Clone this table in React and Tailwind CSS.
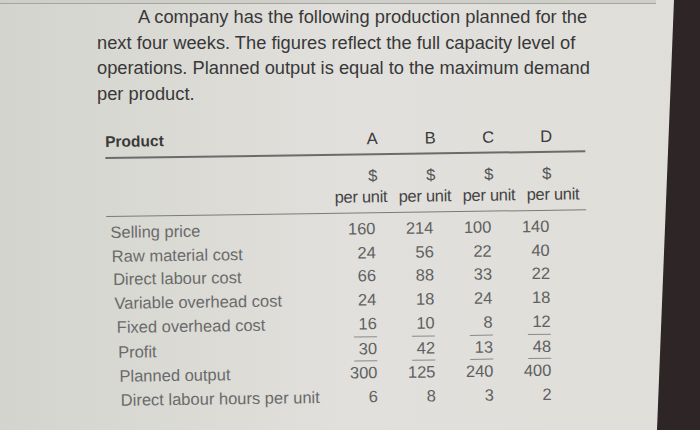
import React from "react";

const rows = [
  { label: "Selling price", v: ["160", "214", "100", "140"], pl: "pl-[4px]" },
  { label: "Raw material cost", v: ["24", "56", "22", "40"], pl: "pl-[5px]" },
  { label: "Direct labour cost", v: ["66", "88", "33", "22"], pl: "pl-[6px]" },
  { label: "Variable overhead cost", v: ["24", "18", "24", "18"], pl: "pl-[7px]" },
  { label: "Fixed overhead cost", v: ["16", "10", "8", "12"], pl: "pl-[9px]", line: true },
  { label: "Profit", v: ["30", "42", "13", "48"], pl: "pl-[10px]", line: true },
  { label: "Planned output", v: ["300", "125", "240", "400"], pl: "pl-[11px]" },
  { label: "Direct labour hours per unit", v: ["6", "8", "3", "2"], pl: "pl-[12px]" },
];

const numW = ["w-[44px]", "w-[58px]", "w-[58px]", "w-[58px]"];

export default function App() {
  return (
    <div
      className="w-[700px] h-[430px] flex overflow-hidden bg-linear-to-r from-[#d4d4ce] via-[#e1e0dc] to-[#dfded9]"
      style={{ fontFamily: '"Liberation Sans", Arial, sans-serif' }}
    >
      <div className="flex-1 flex flex-col">
        <div className="h-[4px] bg-[#cfcfca] border-b border-[#a4a4a0]" />
        <div className="pl-[97px] text-[18.3px] leading-[25.5px] text-[#383838]">
          <div className="pl-[41px]">A company has the following production planned for the</div>
          <div>next four weeks. The figures reflect the full capacity level of</div>
          <div>operations. Planned output is equal to the maximum demand</div>
          <div>per product.</div>
        </div>

        <div className="ml-[105px] mt-[24px] w-[480px] origin-top-left -rotate-[0.8deg] text-[16.5px]">
          <div className="flex items-start leading-[24px] pb-[3px] border-b-2 border-[#6b6b6b]">
            <div className="w-[238px] font-bold text-[15.5px] text-[#3a3a3a]">Product</div>
            {["A", "B", "C", "D"].map((h) => (
              <div key={h} className="w-[58px] text-center text-[#3a3a3a]">
                {h}
              </div>
            ))}
          </div>
          <div className="flex leading-[20px] pt-[10px] text-[#555]">
            <div className="w-[238px]" />
            {["A", "B", "C", "D"].map((h) => (
              <div key={h} className="w-[58px] text-center">
                $
              </div>
            ))}
          </div>
          <div className="flex leading-[20px] pt-[1px] pb-[6px] border-b-[1.5px] border-[#7a7a7a] text-[#444] tracking-[-0.3px]">
            <div className="w-[223px]" />
            {["A", "B", "C", "D"].map((h) => (
              <div key={h} className="w-[64px] text-center">
                per unit
              </div>
            ))}
          </div>
          <div className="pt-[4px]">
            {rows.map((r) => (
              <div key={r.label} className="flex leading-[23.7px]">
                <div className={`w-[225px] text-[#6a6a6a] ${r.pl}`}>{r.label}</div>
                {r.v.map((n, i) => (
                  <div key={i} className={`${numW[i]} flex justify-end text-[#606060]`}>
                    {r.line ? (
                      <span className="inline-block w-[23px] text-right border-b-[1.5px] border-[#8a8a8a]">
                        {n}
                      </span>
                    ) : (
                      <span>{n}</span>
                    )}
                  </div>
                ))}
              </div>
            ))}
          </div>
        </div>
      </div>
      <svg width="44" height="430" viewBox="0 0 44 430" className="shrink-0 block">
        <polygon points="18,0 44,0 44,430 1,430" fill="#2e2527" />
      </svg>
    </div>
  );
}
